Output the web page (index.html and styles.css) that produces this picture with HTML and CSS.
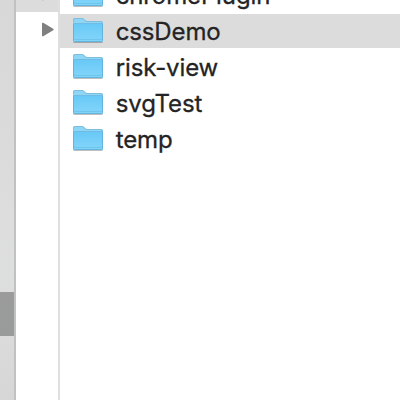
FILE: index.html
```
<!DOCTYPE html>
<html lang="en">
<head>
<meta charset="utf-8">
<title>Finder</title>
<link rel="stylesheet" href="styles.css">
</head>
<body>
<svg class="defs" aria-hidden="true">
  <defs>
    <linearGradient id="front" x1="0" y1="0" x2="0" y2="1">
      <stop offset="0" stop-color="#69c9f6"/>
      <stop offset="1" stop-color="#84d5fa"/>
    </linearGradient>
    <symbol id="folder" viewBox="0 0 32 28">
      <path d="M1.500 25.400h29" stroke="#000" stroke-opacity=".25" stroke-width="1.200"/>
      <path d="M1 3q0-2 2-2h7q1.200 0 2 .9l1.200 1.200q.8.9 2 .9H29q2 0 2 2v17.500q0 1.500-1.500 1.500h-27Q1 25 1 23.500z" fill="#8fd5f5"/>
      <path d="M1.500 5V3q0-1.500 1.500-1.500h7q1 0 1.700.8L13 3.600q.8.900 2 .900h14q1.500 0 1.500 1.500" fill="none" stroke="#7cbde0"/>
      <path d="M1 7h30v16.500q0 1.500-1.500 1.500h-27Q1 25 1 23.500z" fill="url(#front)"/>
      <path d="M1 6.500h30" stroke="#70bce2"/>
      <path d="M2 22.500h28" stroke="#70c5ec"/>
      <path d="M1.500 7v16.500q0 1 1 1h27q1 0 1-1V7" fill="none" stroke="#62b4de"/>
    </symbol>
  </defs>
</svg>
<main class="window">
  <aside class="sidebar"><div class="sidebar-selected"></div></aside>
  <section class="column">
    <div class="column-row"><svg class="arrow-top" viewBox="0 0 14 16"><path d="M1 1.500Q1 .3 2.200.8l10 6q1.200.7 0 1.400l-10 6Q1 14.700 1 13.500z"/></svg></div>
    <svg class="arrow" viewBox="0 0 14 16"><path d="M1 1.500Q1 .3 2.200.8l10 6q1.200.7 0 1.400l-10 6Q1 14.700 1 13.500z"/></svg>
  </section>
  <ul class="files">
    <li class="file"><svg class="icon"><use href="#folder"/></svg><span class="name">chromePlugin</span></li>
    <li class="file selected"><svg class="icon"><use href="#folder"/></svg><span class="name">cssDemo</span></li>
    <li class="file"><svg class="icon"><use href="#folder"/></svg><span class="name">risk-view</span></li>
    <li class="file"><svg class="icon"><use href="#folder"/></svg><span class="name">svgTest</span></li>
    <li class="file"><svg class="icon"><use href="#folder"/></svg><span class="name">temp</span></li>
  </ul>
</main>
</body>
</html>
```
FILE: styles.css
```
* { box-sizing: border-box; }
body {
  margin: 0;
  overflow: hidden;
  background: #fff;
  color: #242424;
  font-family: Inter, "Liberation Sans", sans-serif;
}
.defs { display: block; width: 0; height: 0; }
.window { display: flex; height: 400px; overflow: hidden; }
.sidebar {
  width: 16px;
  padding-top: 292px;
  border-right: 2px solid #c1c1c1;
  background: linear-gradient(#d8d8d8, #dadada 30%, #dddfde 70%, #d6d6d6);
}
.sidebar-selected { height: 44px; background: linear-gradient(#9b9b9b, #999b9b); }
.column { width: 44px; border-right: 2px solid #dfdfdf; }
.column-row { height: 12px; background: #dcdcdc; overflow: hidden; }
.arrow { display: block; width: 14px; height: 16px; margin: 10px 0 0 25px; fill: #808080; }
.arrow-top { display: block; width: 14px; height: 16px; margin: -14px 0 0 25px; fill: #808080; }
.files {
  flex: 1;
  display: flex;
  flex-direction: column;
  gap: 2px;
  margin: -22px 0 0;
  padding: 0;
  list-style: none;
}
.file { display: flex; align-items: center; height: 34px; padding-left: 12px; }
.selected { background: #dcdcdc; }
.icon { flex: none; width: 32px; height: 28px; }
.name {
  margin-left: 11.700px;
  padding-top: 2px;
  font-size: 24px;
  line-height: 34px;
  letter-spacing: -0.12px;
  white-space: nowrap;
  -webkit-text-stroke: 0.3px #242424;
}
```
